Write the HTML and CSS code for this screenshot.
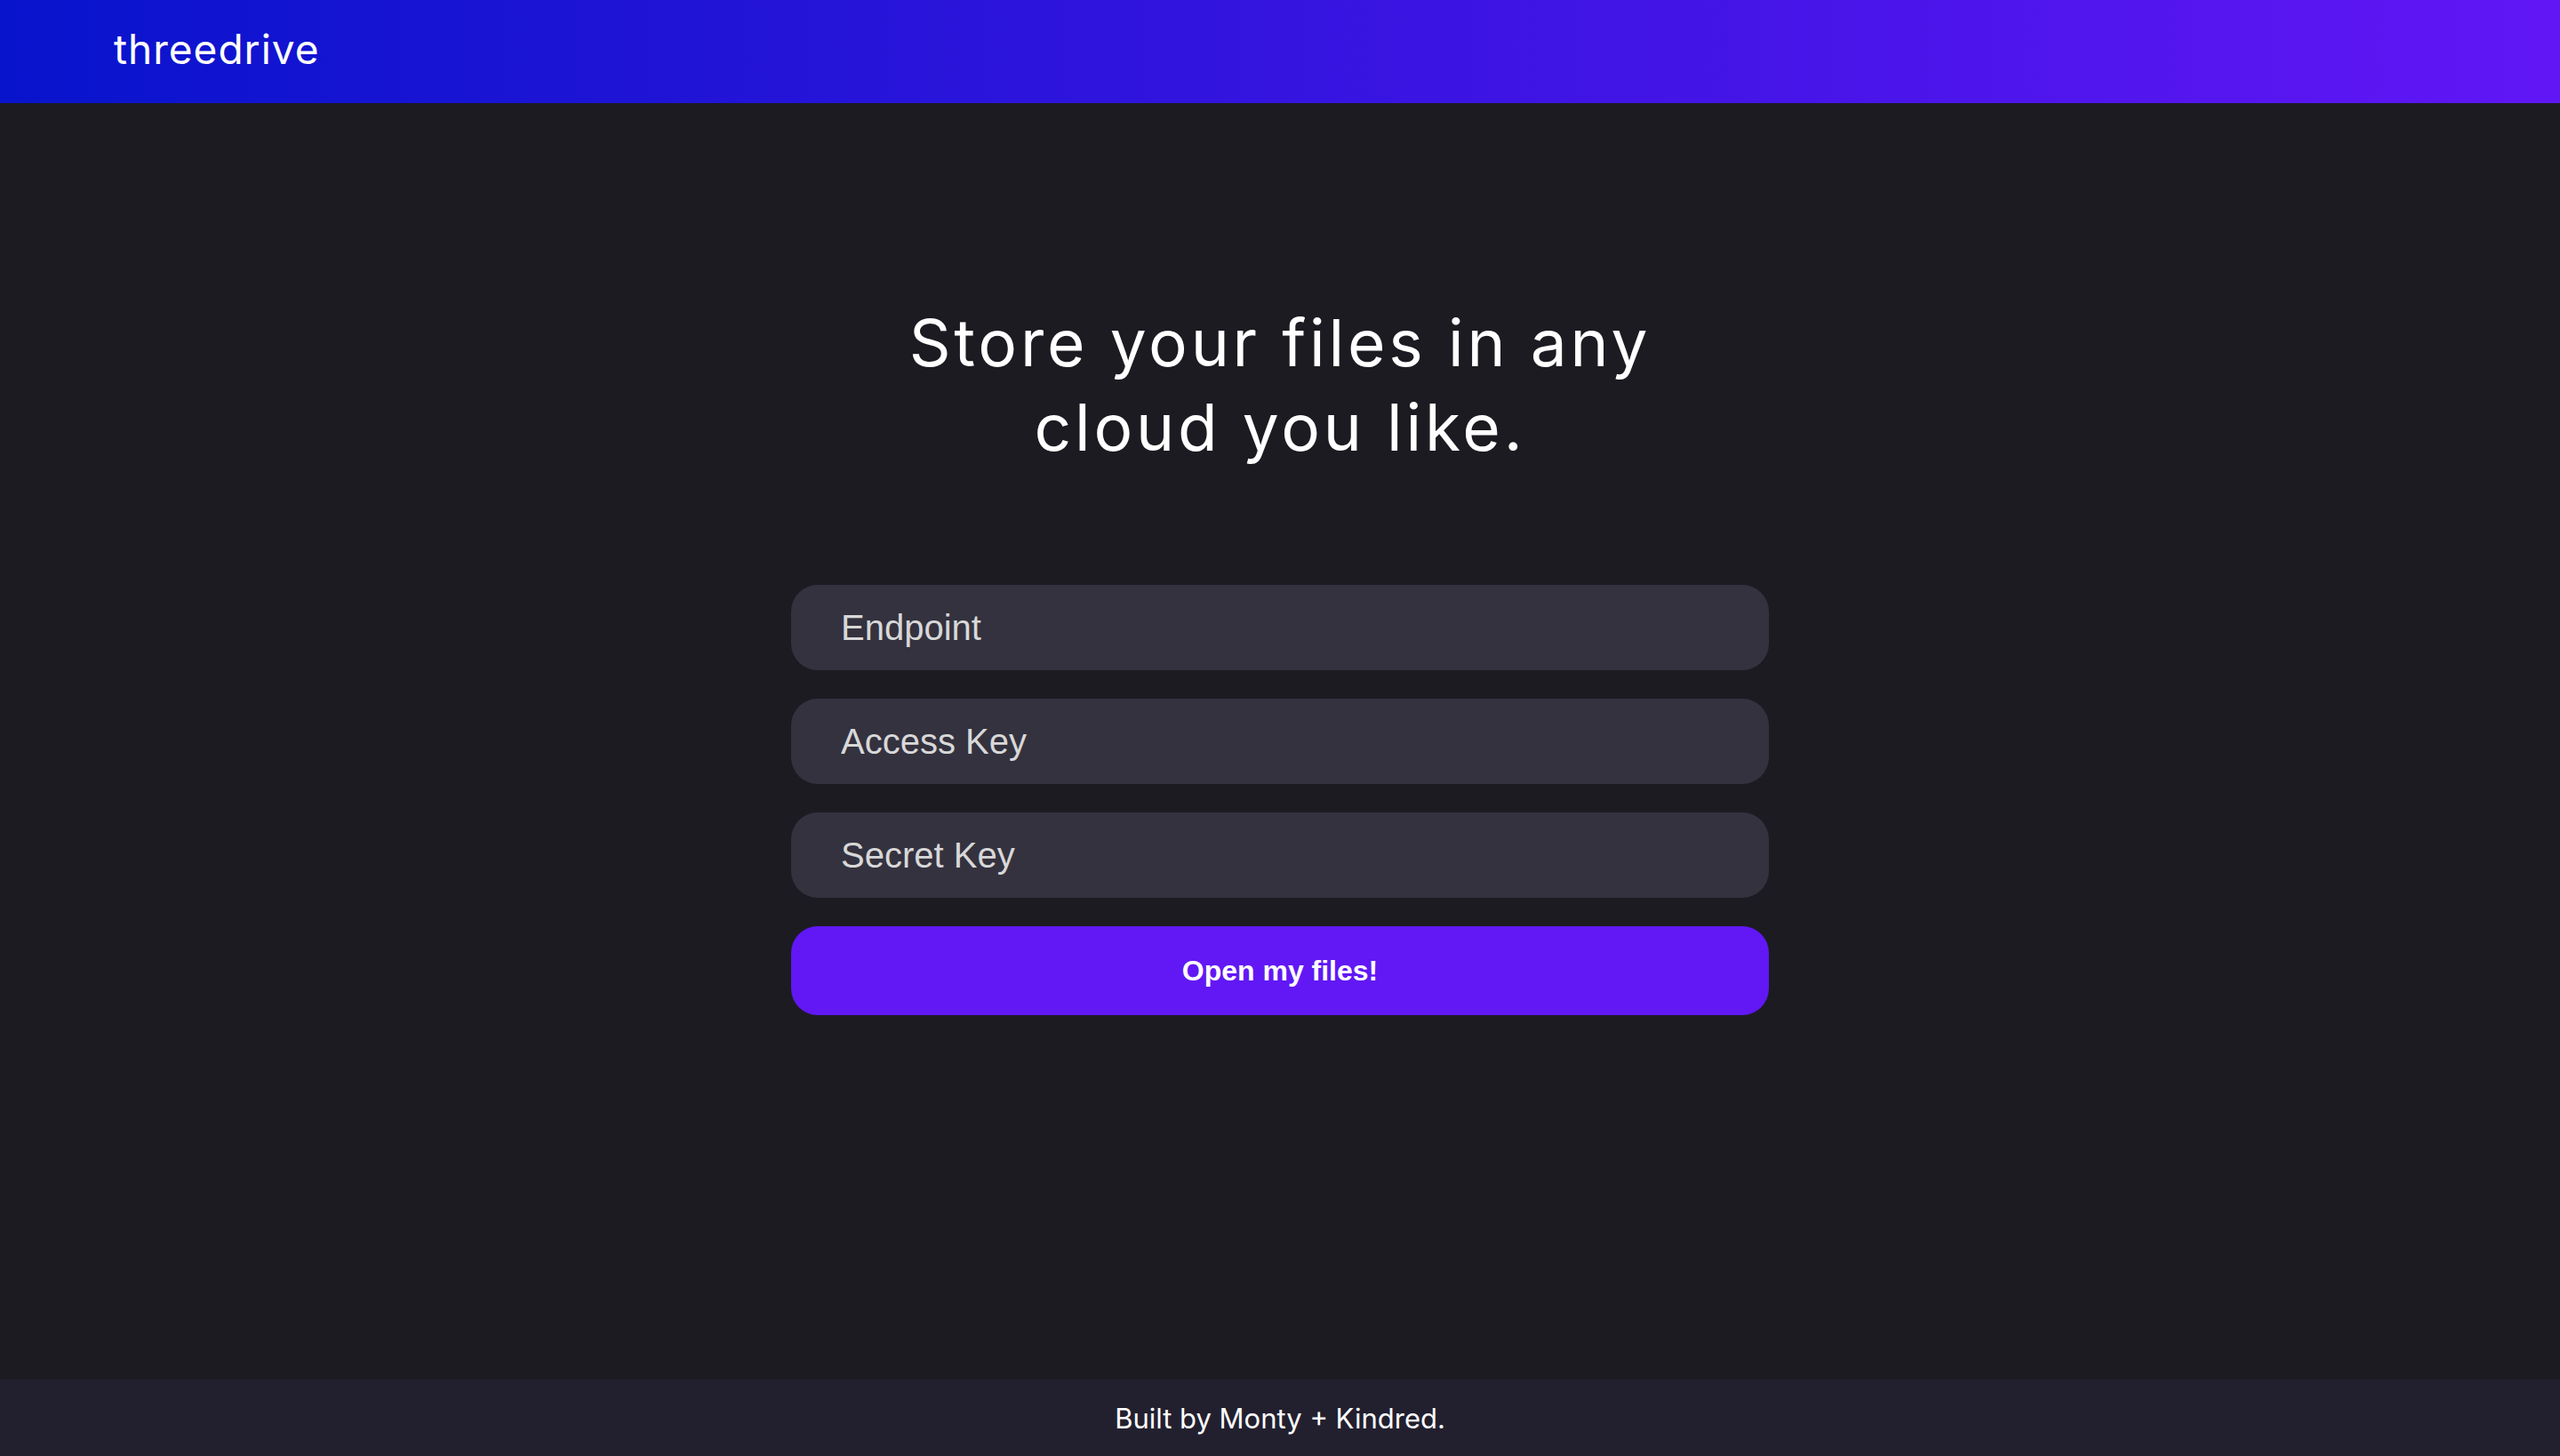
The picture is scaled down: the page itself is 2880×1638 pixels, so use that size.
FILE: index.html
```html
<!DOCTYPE html>
<html lang="en">
<head>
<meta charset="utf-8">
<title>threedrive</title>
<link rel="stylesheet" href="styles.css">
</head>
<body>
<div class="page">
  <header class="topbar">
    <span class="logo">threedrive</span>
  </header>
  <main class="main">
    <h1 class="headline">Store your files in any<br>cloud you like.</h1>
    <form class="login">
      <input class="field" type="text" placeholder="Endpoint">
      <input class="field" type="text" placeholder="Access Key">
      <input class="field" type="password" placeholder="Secret Key">
      <button class="submit" type="button">Open my files!</button>
    </form>
  </main>
  <footer class="footer">Built by Monty + Kindred.</footer>
</div>
</body>
</html>
```
FILE: styles.css
```css
html, body {
  margin: 0;
  padding: 0;
  height: 100%;
}
body {
  background: #1c1b22;
  color: #ffffff;
  font-family: Inter, "Open Sans", sans-serif;
}
.page {
  min-height: 100vh;
  display: flex;
  flex-direction: column;
}
.topbar {
  height: 116px;
  box-sizing: border-box;
  padding-left: 128px;
  display: flex;
  align-items: center;
  background: linear-gradient(90deg, #0814cc 0%, #3514e0 50%, #6116f5 100%);
}
.logo {
  font-size: 46px;
  font-weight: 400;
  letter-spacing: 1px;
  padding-bottom: 6px;
}
.main {
  flex: 1;
  display: flex;
  flex-direction: column;
  align-items: center;
  padding-top: 222px;
}
.headline {
  margin: 0;
  font-size: 73px;
  line-height: 95px;
  font-weight: 400;
  letter-spacing: 3.8px;
  text-align: center;
}
.login {
  margin-top: 130px;
  width: 1100px;
  display: flex;
  flex-direction: column;
  gap: 32px;
}
.field {
  height: 96px;
  box-sizing: border-box;
  border: none;
  border-radius: 30px;
  background: #34323f;
  padding: 0 56px;
  font-family: "Liberation Sans", Arial, sans-serif;
  font-size: 40px;
  color: #e0e0e0;
  outline: none;
}
.field::placeholder {
  color: #d8d8d8;
}
.submit {
  height: 100px;
  border: none;
  border-radius: 30px;
  background: #6118f5;
  color: #ffffff;
  font-family: "Liberation Sans", Arial, sans-serif;
  font-weight: 700;
  font-size: 32px;
  cursor: pointer;
}
.footer {
  height: 86px;
  background: #22202f;
  display: flex;
  align-items: center;
  justify-content: center;
  font-size: 31px;
}
```
